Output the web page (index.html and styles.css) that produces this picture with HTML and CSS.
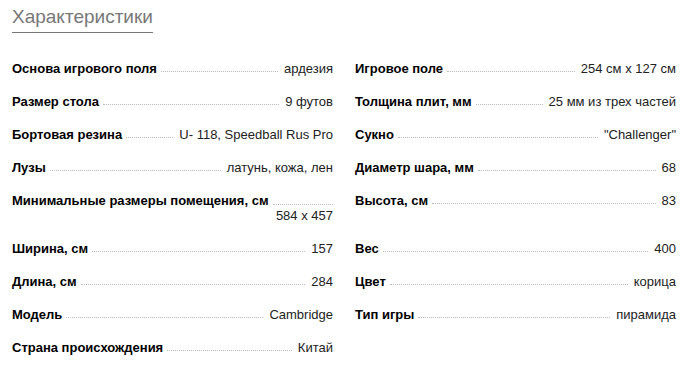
FILE: index.html
```html
<!DOCTYPE html>
<html lang="ru">
<head>
<meta charset="utf-8">
<title>Характеристики</title>
<link rel="stylesheet" href="styles.css">
</head>
<body>
<div class="specs">
  <h2 class="specs-title">Характеристики</h2>
  <div class="specs-grid">
    <div class="row"><span class="label">Основа игрового поля</span><span class="dots"></span><span class="value">ардезия</span></div>
    <div class="row"><span class="label">Игровое поле</span><span class="dots"></span><span class="value">254 см x 127 см</span></div>

    <div class="row"><span class="label">Размер стола</span><span class="dots"></span><span class="value">9 футов</span></div>
    <div class="row"><span class="label">Толщина плит, мм</span><span class="dots"></span><span class="value">25 мм из трех частей</span></div>

    <div class="row"><span class="label">Бортовая резина</span><span class="dots"></span><span class="value">U- 118, Speedball Rus Pro</span></div>
    <div class="row"><span class="label">Сукно</span><span class="dots"></span><span class="value">"Challenger"</span></div>

    <div class="row"><span class="label">Лузы</span><span class="dots"></span><span class="value">латунь, кожа, лен</span></div>
    <div class="row"><span class="label">Диаметр шара, мм</span><span class="dots"></span><span class="value">68</span></div>

    <div class="row row-wrap"><span class="label">Минимальные размеры помещения, см</span><span class="dots"></span><span class="value">584 x 457</span></div>
    <div class="row"><span class="label">Высота, см</span><span class="dots"></span><span class="value">83</span></div>

    <div class="row"><span class="label">Ширина, см</span><span class="dots"></span><span class="value">157</span></div>
    <div class="row"><span class="label">Вес</span><span class="dots"></span><span class="value">400</span></div>

    <div class="row"><span class="label">Длина, см</span><span class="dots"></span><span class="value">284</span></div>
    <div class="row"><span class="label">Цвет</span><span class="dots"></span><span class="value">корица</span></div>

    <div class="row"><span class="label">Модель</span><span class="dots"></span><span class="value">Cambridge</span></div>
    <div class="row"><span class="label">Тип игры</span><span class="dots"></span><span class="value">пирамида</span></div>

    <div class="row"><span class="label">Страна происхождения</span><span class="dots"></span><span class="value">Китай</span></div>
  </div>
</div>
</body>
</html>
```
FILE: styles.css
```css
html, body {
  margin: 0;
  padding: 0;
  background: #fff;
}

body {
  font-family: "Liberation Sans", Arial, sans-serif;
  color: #222;
}

.specs {
  padding: 6px 14px 0 12px;
}

.specs-title {
  display: inline-block;
  margin: 0;
  font-size: 19px;
  line-height: 21px;
  font-weight: normal;
  color: #777;
  padding-bottom: 5px;
  border-bottom: 1px solid #777;
}

.specs-grid {
  display: grid;
  grid-template-columns: 321px 321px;
  column-gap: 22px;
  align-items: start;
  margin-top: 19px;
}

.row {
  display: flex;
  align-items: flex-end;
  padding: 9px 0;
  font-size: 13px;
  line-height: 15px;
}

.label {
  font-weight: bold;
  color: #000;
  white-space: nowrap;
}

.dots {
  flex: 1;
  min-width: 8px;
  height: 0;
  border-bottom: 1px dotted #bbb;
  margin: 0 6px 4px 4px;
}

.value {
  white-space: nowrap;
  color: #222;
}

.row-wrap {
  flex-wrap: wrap;
  align-items: flex-start;
}

.row-wrap .dots {
  margin: 11px 0 0 4px;
}

.row-wrap .value {
  flex-basis: 100%;
  text-align: right;
}
```
